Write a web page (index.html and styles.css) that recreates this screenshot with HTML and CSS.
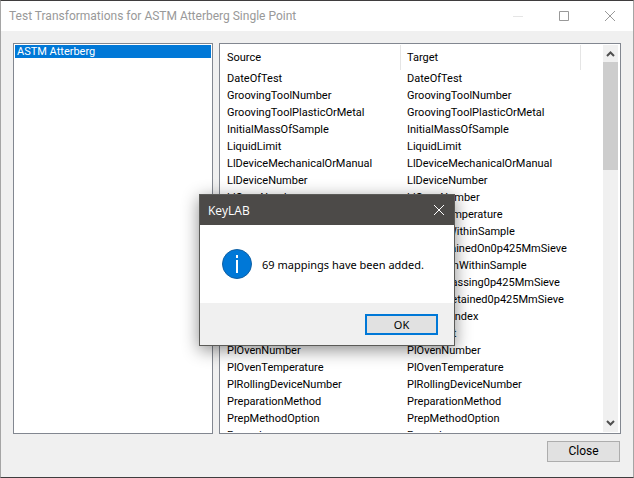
FILE: index.html
```html
<!DOCTYPE html>
<html lang="en">
<head>
    <meta charset="UTF-8">
    <meta name="viewport" content="width=device-width, initial-scale=1.0">
    <title>Test Transformations</title>
    <link rel="stylesheet" href="styles.css">
</head>
<body>
    <div class="window">
        <header class="titlebar">
            <h1>Test Transformations for ASTM Atterberg Single Point</h1>
            <div class="window-buttons">
                <button type="button" class="minimize" aria-label="Minimize">
                    <svg width="10" height="10" viewBox="0 0 10 10"><path d="M0 5.5h10"/></svg>
                </button>
                <button type="button" aria-label="Maximize">
                    <svg width="10" height="10" viewBox="0 0 10 10"><path d="M.5.5h9v9h-9z"/></svg>
                </button>
                <button type="button" aria-label="Close window">
                    <svg width="10" height="10" viewBox="0 0 10 10"><path d="M0 0l10 10M10 0L0 10"/></svg>
                </button>
            </div>
        </header>

        <main class="content">
            <ul class="panel tests">
                <li class="selected">ASTM Atterberg</li>
            </ul>

            <div class="panel mappings">
                <div class="table-view">
                    <table>
                        <thead>
                            <tr><th>Source</th><th>Target</th><th></th></tr>
                        </thead>
                        <tbody id="rows"></tbody>
                    </table>
                </div>
                <div class="scrollbar">
                    <svg width="15" height="17" viewBox="0 0 15 17"><path d="M4 11l3.500-3.500L11 11"/></svg>
                    <div class="thumb"></div>
                    <svg width="15" height="17" viewBox="0 0 15 17"><path d="M4 6l3.500 3.500L11 6"/></svg>
                </div>
            </div>
        </main>

        <footer class="actions">
            <button type="button" class="button">Close</button>
        </footer>
    </div>

    <dialog open class="message" aria-labelledby="messageTitle">
        <header class="message-title">
            <h2 id="messageTitle">KeyLAB</h2>
            <button type="button" aria-label="Close message">
                <svg width="10" height="10" viewBox="0 0 10 10"><path d="M0 0l10 10M10 0L0 10"/></svg>
            </button>
        </header>
        <div class="message-body">
            <svg width="30" height="30" viewBox="0 0 30 30">
                <circle cx="15" cy="15" r="14.500" fill="#0078d7" stroke="#1160a4"/>
                <path d="M14 6h2v3h-2zM14 11h2v13h-2z" fill="#fff"/>
            </svg>
            <p>69 mappings have been added.</p>
        </div>
        <footer class="message-actions">
            <button type="button" class="button default">OK</button>
        </footer>
    </dialog>

    <script>
        const fields = [
            'DateOfTest',
            'GroovingToolNumber',
            'GroovingToolPlasticOrMetal',
            'InitialMassOfSample',
            'LiquidLimit',
            'LlDeviceMechanicalOrManual',
            'LlDeviceNumber',
            'LlOvenNumber',
            'LlOvenTemperature',
            'MaterialWithinSample',
            'MassRetainedOn0p425MmSieve',
            'ProportionWithinSample',
            'PercentPassing0p425MmSieve',
            'PercentRetained0p425MmSieve',
            'PlasticityIndex',
            'PlastLimit',
            'PlOvenNumber',
            'PlOvenTemperature',
            'PlRollingDeviceNumber',
            'PreparationMethod',
            'PrepMethodOption',
            'Procedure'
        ];
        const rows = document.getElementById('rows');

        fields.forEach((field) => {
            const row = rows.insertRow();
            row.insertCell().textContent = field;
            row.insertCell().textContent = field;
            row.insertCell();
        });
    </script>
</body>
</html>
```

FILE: styles.css
```css
* {
    box-sizing: border-box;
}

body {
    margin: 0;
    height: 100vh;
    overflow: hidden;
    font-family: Roboto, "Liberation Sans", sans-serif;
    font-size: 11px;
    color: #000;
}

h1, h2, p, ul {
    margin: 0;
    padding: 0;
    font-weight: normal;
}

button {
    font-family: inherit;
    padding: 0;
}

svg {
    display: block;
    flex: none;
}

.window {
    display: flex;
    flex-direction: column;
    height: 100vh;
    background: #f0f0f0;
    border: 1px solid #3f3d3e;
    border-left-color: #a5a5a5;
    border-right-color: #a5a5a5;
}

.titlebar {
    display: flex;
    justify-content: space-between;
    height: 30px;
    flex: none;
    background: #fff;
}

.titlebar h1 {
    padding-left: 8px;
    font-size: 12px;
    line-height: 30px;
    color: #999;
}

.window-buttons {
    display: flex;
}

.window-buttons button {
    display: flex;
    align-items: center;
    justify-content: center;
    width: 46px;
    background: none;
    border: none;
}

.window-buttons path {
    fill: none;
    stroke: #999;
}

.window-buttons .minimize path {
    stroke: #e5e5e5;
}

.content {
    flex: 1;
    min-height: 0;
    display: grid;
    grid-template-columns: 200px 1fr;
    gap: 6px;
    padding: 12px 12px 0;
}

.panel {
    min-height: 0;
    overflow: hidden;
    padding: 1px;
    background: #fff;
    border: 1px solid #828790;
}

.tests {
    list-style: none;
}

.tests li {
    padding: 0 2px;
    line-height: 13px;
}

.tests .selected {
    background: #0078d7;
    color: #fff;
}

.mappings {
    display: flex;
}

.table-view {
    flex: 1;
    overflow: hidden;
}

table {
    width: 100%;
    table-layout: fixed;
    border-collapse: separate;
    border-spacing: 0;
}

th, td {
    height: 17px;
    padding: 0 6px;
    line-height: 17px;
    text-align: left;
    font-weight: normal;
    white-space: nowrap;
}

th {
    width: 180px;
    height: 25px;
    border-right: 1px solid #e5e5e5;
}

th:last-child {
    width: auto;
    border-right: none;
}

.scrollbar {
    display: flex;
    flex-direction: column;
    justify-content: space-between;
    width: 16px;
    background: #f0f0f0;
    border-right: 1px solid #fff;
}

.scrollbar path {
    fill: none;
    stroke: #505050;
    stroke-width: 2;
}

.thumb {
    height: 28%;
    margin-bottom: auto;
    background: #cdcdcd;
}

.actions {
    display: flex;
    justify-content: flex-end;
    padding: 7px 13px 15px;
}

.button {
    width: 73px;
    height: 21px;
    font-size: 12px;
    line-height: 17px;
    background: #e1e1e1;
    color: #000;
    border: 1px solid #adadad;
}

.button.default {
    font-size: 11px;
    border: 2px solid #0078d7;
}

.message {
    position: absolute;
    top: 194px;
    left: 199px;
    width: 256px;
    margin: 0;
    padding: 0;
    background: #fff;
    color: #000;
    border: 1px solid #5b5b58;
    box-shadow: 0 4px 16px rgba(0, 0, 0, 0.45);
    font-family: "Noto Sans", sans-serif;
}

.message-title {
    display: flex;
    align-items: center;
    justify-content: space-between;
    height: 30px;
    padding: 0 10px 0 8px;
    background: #4c4a48;
    color: #fff;
}

.message-title h2 {
    font-family: "Open Sans", sans-serif;
    font-size: 12px;
}

.message-title button {
    background: none;
    border: none;
}

.message-title path {
    fill: none;
    stroke: #fff;
}

.message-body {
    display: flex;
    align-items: center;
    gap: 10px;
    height: 78px;
    padding: 0 22px;
}

.message-body p {
    white-space: nowrap;
}

.message-actions {
    display: flex;
    justify-content: flex-end;
    padding: 11px 16px 10px;
    background: #f0f0f0;
}
```
